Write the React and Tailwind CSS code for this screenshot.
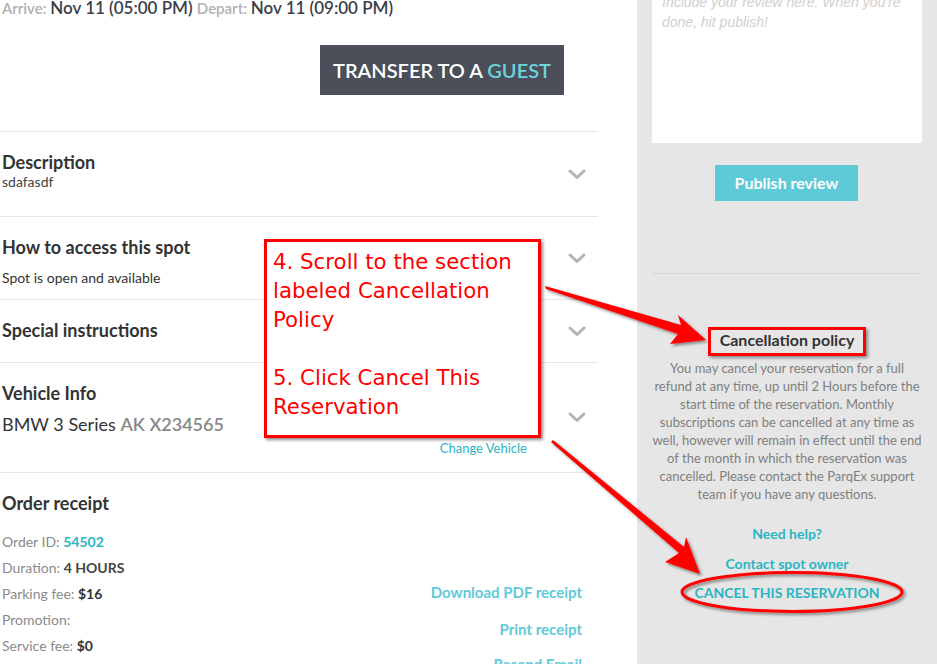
import React from "react";

function Chevron() {
  return (
    <svg width="18" height="11" viewBox="0 0 18 11" className="shrink-0">
      <path d="M2 2 L9 8.5 L16 2" fill="none" stroke="#b3b3b3" strokeWidth="3" strokeLinecap="round" strokeLinejoin="round" />
    </svg>
  );
}

function Section({ h, children }) {
  return (
    <div className={`relative flex border-t border-[#e6e6e6] ${h}`}>
      <div className="flex-1 pl-[2px]">{children}</div>
      <div className="flex w-[40px] items-center justify-center pr-[2px]">
        <Chevron />
      </div>
    </div>
  );
}

export default function App() {
  return (
    <div className="relative h-[664px] w-[937px] overflow-hidden bg-white font-['Lato',sans-serif]">
      <div className="flex h-full">
        {/* Left column */}
        <div className="w-[598px] shrink-0">
          <div className="-mt-[4px] h-[24px] pl-[2px] text-[17px] leading-[24px] whitespace-nowrap">
            <span className="text-[15px] font-semibold text-[#b0b0b0]">Arrive: </span>
            <span className="font-semibold text-[#3b3f4a]">Nov 11 (05:00 PM) </span>
            <span className="text-[15px] font-semibold text-[#b0b0b0]">Depart: </span>
            <span className="font-semibold text-[#3b3f4a]">Nov 11 (09:00 PM)</span>
          </div>
          <div className="flex justify-end pr-[34px] pt-[25px] pb-[36px]">
            <div className="flex h-[50px] w-[244px] items-center justify-center bg-[#4a4f5a] text-[20px] font-semibold text-white">
              TRANSFER TO A&nbsp;<span className="text-[#6fd3de]">GUEST</span>
            </div>
          </div>

          <Section h="h-[85px]">
            <div className="pt-[19px] text-[18px] font-bold leading-[22px] text-[#333]">Description</div>
            <div className="text-[14px] leading-[18px] text-[#444]">sdafasdf</div>
          </Section>
          <Section h="h-[83px]">
            <div className="pt-[19px] text-[18px] font-bold leading-[22px] text-[#333]">How to access this spot</div>
            <div className="pt-[11px] text-[14px] leading-[18px] text-[#333]">Spot is open and available</div>
          </Section>
          <Section h="h-[63px]">
            <div className="pt-[19px] text-[18px] font-bold leading-[22px] text-[#333]">Special instructions</div>
          </Section>
          <Section h="h-[110px]">
            <div className="pt-[19px] text-[18px] font-bold leading-[22px] text-[#333]">Vehicle Info</div>
            <div className="pt-[9px] text-[18px] leading-[22px] text-[#333]">
              BMW 3 Series <span className="font-semibold text-[#888]">AK X234565</span>
            </div>
            <div className="pt-[5px] pr-[31px] text-right text-[13px] leading-[16px] text-[#2ab5c4]">Change Vehicle</div>
          </Section>

          <div className="flex border-t border-[#e6e6e6]">
            <div className="flex-1 pl-[2px]">
              <div className="pt-[19px] text-[18px] font-bold leading-[22px] text-[#333]">Order receipt</div>
              <div className="pt-[15px] text-[14px] leading-[26px] text-[#8a8a8a]">
                <div>Order ID: <span className="font-bold text-[#2ab5c4]">54502</span></div>
                <div>Duration: <span className="font-bold text-[#444]">4 HOURS</span></div>
                <div>Parking fee: <span className="font-bold text-[#333]">$16</span></div>
                <div>Promotion:</div>
                <div>Service fee: <span className="font-bold text-[#333]">$0</span></div>
              </div>
            </div>
            <div className="flex flex-col items-end pr-[16px] pt-[109px] text-[15px] font-bold text-[#62c9d8]">
              <div className="leading-[20px]">Download PDF receipt</div>
              <div className="pt-[17px] leading-[20px]">Print receipt</div>
              <div className="pt-[15px] leading-[20px]">Resend Email</div>
            </div>
          </div>
        </div>

        <div className="w-[39px] shrink-0" />

        {/* Right panel */}
        <div className="flex-1 bg-[#e6e6e6] px-[15px]">
          <div className="-mt-[20px] h-[163px] bg-white px-[10px] pt-[12px] font-['Liberation_Sans',sans-serif] text-[14px] italic leading-[20px] text-[#cfcfcf]">
            Include your review here. When you're done, hit publish!
          </div>
          <div className="flex justify-center pt-[22px] pr-[1px]">
            <div className="flex h-[36px] w-[143px] items-center justify-center bg-[#5ecad7] text-[16px] font-bold text-white">
              Publish review
            </div>
          </div>
          <div className="mt-[72px] border-t border-[#d6d6d6]" />
          <div className="pt-[56px] text-center text-[16px] font-bold leading-[20px] text-[#333]">Cancellation policy</div>
          <div className="pt-[9px] text-center text-[13px] leading-[18px] text-[#7f7f7f]">
            You may cancel your reservation for a full refund at any time, up until 2 Hours before the start time of the reservation. Monthly subscriptions can be cancelled at any time as well, however will remain in effect until the end of the month in which the reservation was cancelled. Please contact the ParqEx support team if you have any questions.
          </div>
          <div className="pt-[21px] text-center text-[14px] font-bold leading-[20px] text-[#2ab5c4]">Need help?</div>
          <div className="pt-[10px] text-center text-[14px] font-bold leading-[20px] text-[#2ab5c4]">Contact spot owner</div>
          <div className="pt-[9px] text-center text-[14px] font-bold leading-[20px] text-[#2ab5c4]">CANCEL THIS RESERVATION</div>
        </div>
      </div>

      {/* Annotation box */}
      <div className="absolute left-[264px] top-[239px] h-[199px] w-[277px] border-[3px] border-[#ff0000] bg-white px-[6px] pt-[5px] font-['DejaVu_Sans',sans-serif] text-[21.3px] leading-[29px] text-[#ff0000] shadow-[2px_2px_3px_rgba(0,0,0,0.45)]">
        <div>4. Scroll to the section labeled Cancellation Policy</div>
        <div className="pt-[29px]">5. Click Cancel This Reservation</div>
      </div>

      {/* Highlight rect around Cancellation policy */}
      <div className="absolute left-[708px] top-[327px] h-[29px] w-[158px] border-[3px] border-[#ff0000] shadow-[2px_2px_3px_rgba(0,0,0,0.4)]" />

      {/* Arrows and ellipse */}
      <svg className="pointer-events-none absolute left-0 top-0" width="937" height="664" viewBox="0 0 937 664">
        <defs>
          <filter id="sh" x="-20%" y="-20%" width="140%" height="140%">
            <feDropShadow dx="2" dy="2" stdDeviation="1.5" floodColor="#000" floodOpacity="0.45" />
          </filter>
        </defs>
        <g filter="url(#sh)" fill="#ff0000">
          <polygon points="545,286 546,289 678,334 670,344 706,340 678,315 681,325" />
          <polygon points="553,440 551,442 679,553 665,562 700,574 686,537 684,547" />
        </g>
        <ellipse cx="792" cy="592" rx="110" ry="19.5" fill="none" stroke="#ff0000" strokeWidth="3" filter="url(#sh)" />
      </svg>
    </div>
  );
}
